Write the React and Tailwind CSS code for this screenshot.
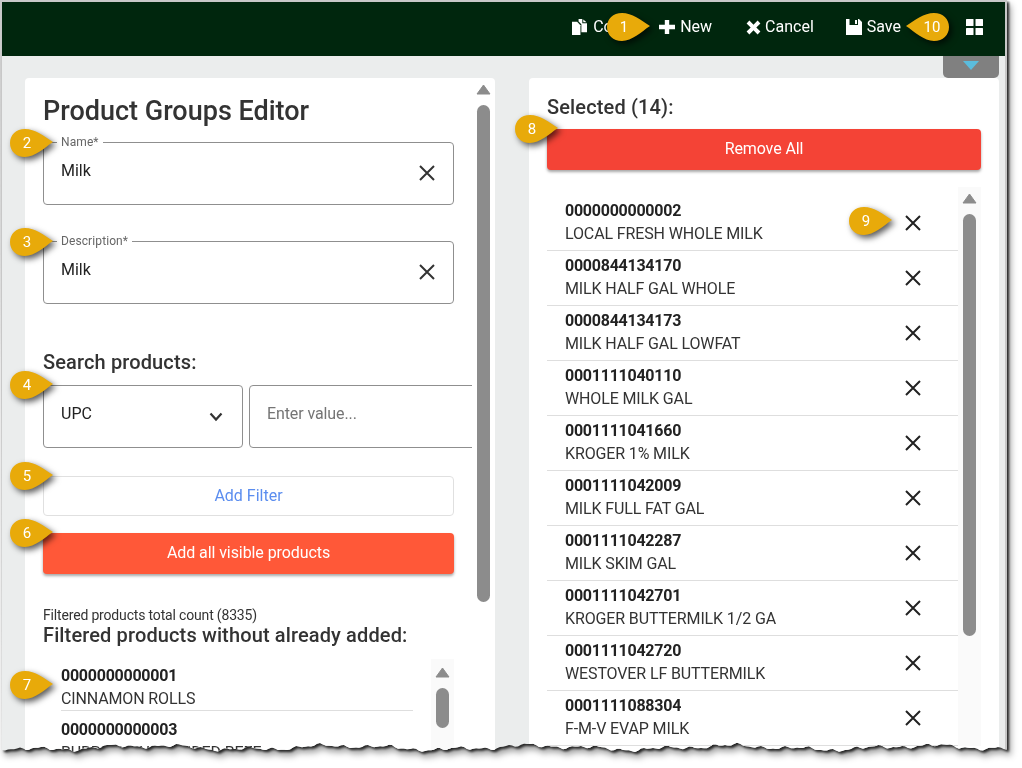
const selected = [
  ["0000000000002", "LOCAL FRESH WHOLE MILK"],
  ["0000844134170", "MILK HALF GAL WHOLE"],
  ["0000844134173", "MILK HALF GAL LOWFAT"],
  ["0001111040110", "WHOLE MILK GAL"],
  ["0001111041660", "KROGER 1% MILK"],
  ["0001111042009", "MILK FULL FAT GAL"],
  ["0001111042287", "MILK SKIM GAL"],
  ["0001111042701", "KROGER BUTTERMILK 1/2 GA"],
  ["0001111042720", "WESTOVER LF BUTTERMILK"],
  ["0001111088304", "F-M-V EVAP MILK"],
];

const callouts = [
  { n: 1, x: 605, y: 11 },
  { n: 10, x: 904, y: 11, flip: true },
  { n: 2, x: 8, y: 127 },
  { n: 3, x: 8, y: 226 },
  { n: 4, x: 8, y: 369 },
  { n: 5, x: 8, y: 460 },
  { n: 6, x: 8, y: 517 },
  { n: 7, x: 8, y: 669 },
  { n: 8, x: 513, y: 113 },
  { n: 9, x: 847, y: 205 },
];

// torn paper edge along the bottom of the screenshot
function tornEdge() {
  const pts = ["0px 0px", "1007px 0px"];
  for (let x = 1007; x >= 0; x -= 3) {
    const y =
      747.5 +
      1.8 * Math.sin(x / 31) +
      1.3 * Math.sin(x / 11 + 1) +
      1.1 * Math.sin(x / 3.7) +
      0.7 * Math.sin(x / 1.9);
    pts.push(`${x}px ${y.toFixed(1)}px`);
  }
  return `polygon(${pts.join(",")})`;
}

function CloseIcon({ className }) {
  return (
    <svg viewBox="0 0 18 18" className={className} fill="none" stroke="currentColor" strokeWidth="2">
      <path d="M2 2 L16 16 M16 2 L2 16" />
    </svg>
  );
}

function CopyIcon() {
  return (
    <svg viewBox="0 0 16 17" className="w-[15px] h-[16px]" fill="currentColor">
      <path d="M0 3h5.5L9 6.5V17H0z" />
      <path d="M7 0h4v4.5h5V14h-6V5.5L7 2.5z" />
      <path d="M12 0.5L15.5 3.5H12z" />
    </svg>
  );
}

function PlusIcon() {
  return (
    <svg viewBox="0 0 16 16" className="w-[16px] h-[16px]" fill="currentColor">
      <path d="M5.8 1h4.4v4.8H16v4.4h-5.8V15H5.8v-4.8H0V5.8h5.8z" />
    </svg>
  );
}

function TimesIcon() {
  return (
    <svg viewBox="0 0 15 15" className="w-[15px] h-[15px]" fill="currentColor">
      <path d="M3.4 0.6L7.5 4.7L11.6 0.6L14.4 3.4L10.3 7.5L14.4 11.6L11.6 14.4L7.5 10.3L3.4 14.4L0.6 11.6L4.7 7.5L0.6 3.4Z" />
    </svg>
  );
}

function SaveIcon() {
  return (
    <svg viewBox="0 0 16 16" className="w-[16px] h-[16px]" fill="currentColor" fillRule="evenodd">
      <path d="M0 0H13L16 3V16H0ZM3.5 0V6H12V0ZM9 1H11V5H9Z" />
    </svg>
  );
}

function GridIcon() {
  return (
    <svg viewBox="0 0 17 16" className="w-[17px] h-[16px] text-white" fill="currentColor">
      <rect width="7.5" height="7" rx="0.5" />
      <rect x="9.5" width="7.5" height="7" rx="0.5" />
      <rect y="9" width="7.5" height="7" rx="0.5" />
      <rect x="9.5" y="9" width="7.5" height="7" rx="0.5" />
    </svg>
  );
}

function ArrowUp() {
  return (
    <svg viewBox="0 0 15 11" className="w-[15px] h-[11px] shrink-0 text-[#8c8c8c]" fill="currentColor">
      <path d="M7.5 1L14 10H1Z" stroke="currentColor" strokeLinejoin="round" />
    </svg>
  );
}

function Callout({ n, x, y, flip }) {
  return (
    <div
      className="absolute w-[43px] h-[28px] flex items-center drop-shadow-[3px_3px_3px_rgba(0,0,0,0.65)]"
      style={{ left: x, top: y }}
    >
      <svg viewBox="0 0 43 28" className={`absolute inset-0 w-[43px] h-[28px] ${flip ? "-scale-x-100" : ""}`}>
        <path d="M15 0 C25 0 34 7 43 13 C34 19 25 28 15 28 C6 28 0 22 0 14 C0 6 6 0 15 0 Z" fill="#e8aa0a" />
      </svg>
      <span className={`relative text-white text-[15px] text-center w-[34px] ${flip ? "ml-[9px]" : ""}`}>{n}</span>
    </div>
  );
}

function Field({ label, value, className }) {
  return (
    <fieldset className={`h-[70px] border border-[#8f8f8f] rounded pl-[13px] pr-[17px] ${className}`}>
      <legend className="px-[4px] text-[12px] leading-[14px] tracking-[0.1px] text-[#666]">{label}</legend>
      <div className="flex items-center justify-between h-[42px]">
        <span className="text-[16px] text-[#222] pl-[4px] mt-[2px]">{value}</span>
        <CloseIcon className="w-[18px] h-[18px] text-[#333] mt-[6px]" />
      </div>
    </fieldset>
  );
}

function HeaderAction({ icon, label, className }) {
  return (
    <div className={`flex items-center text-white text-[16px] ${className}`}>
      {icon}
      <span>{label}</span>
    </div>
  );
}

function Scrollbar({ thumb, className }) {
  return (
    <div className={`flex flex-col items-center ${className}`}>
      <ArrowUp />
      <div className={`w-[13px] mt-[10px] rounded-[7px] bg-[#8c8c8c] ${thumb}`} />
    </div>
  );
}

export default function App() {
  return (
    <div className="w-[1022px] h-[768px] bg-white overflow-hidden font-['Roboto',sans-serif] text-[#333]">
      <div className="w-[1007px] [filter:drop-shadow(2px_2px_1px_rgba(0,0,0,0.75))_drop-shadow(2px_4px_3px_rgba(0,0,0,0.4))]">
        <div
          className="relative w-[1007px] h-[755px] border-2 border-[#c8c8c8] bg-[#ebeded] flex flex-col overflow-hidden"
          style={{ clipPath: tornEdge() }}
        >
          {/* top bar */}
          <div className="h-[54px] shrink-0 bg-[#00260d] flex items-center justify-end pr-[22px] pb-[4px]">
            <HeaderAction icon={<CopyIcon />} label="Copy" className="gap-[6px] mr-[30px]" />
            <HeaderAction icon={<PlusIcon />} label="New" className="gap-[5px] mr-[34px]" />
            <HeaderAction icon={<TimesIcon />} label="Cancel" className="gap-[4px] mr-[32px]" />
            <HeaderAction icon={<SaveIcon />} label="Save" className="gap-[5px] mr-[65px]" />
            <GridIcon />
          </div>

          {/* collapse tab */}
          <div className="h-[22px] shrink-0 flex justify-end pr-[6px]">
            <div className="w-[56px] h-[22px] bg-[#808080] rounded-b-[5px] flex justify-center pt-[5px]">
              <div className="w-0 h-0 border-x-[8px] border-x-transparent border-t-[9px] border-t-[#5bbcdc]" />
            </div>
          </div>

          <div className="flex-1 min-h-0 flex pl-[23px] pr-[6px] gap-[34px]">
            {/* editor */}
            <div className="w-[470px] bg-white rounded-t flex overflow-hidden">
              <div className="w-[447px] shrink-0 pl-[18px] overflow-hidden">
                <h1 className="mt-[15px] text-[27px] leading-[36px] font-medium text-[#333]">Product Groups Editor</h1>
                <Field label="Name*" value="Milk" className="w-[411px] mt-[6px]" />
                <Field label="Description*" value="Milk" className="w-[411px] mt-[29px]" />
                <h2 className="mt-[46px] text-[20px] leading-[24px] font-medium tracking-[0.13px] text-[#333]">Search products:</h2>
                <div className="mt-[11px] flex gap-[6px] w-[500px]">
                  <div className="w-[200px] h-[63px] border border-[#8f8f8f] rounded pl-[17px] pr-[19px] pt-[18px] flex justify-between">
                    <span className="text-[16px] leading-[20px] text-[#222]">UPC</span>
                    <svg viewBox="0 0 14 10" className="w-[14px] h-[10px] mt-[8px] text-[#333]" fill="none" stroke="currentColor" strokeWidth="2.2">
                      <path d="M1.5 1.5 L7 7.5 L12.5 1.5" />
                    </svg>
                  </div>
                  <div className="w-[290px] h-[63px] border border-[#8f8f8f] rounded pl-[17px] pt-[16px]">
                    <span className="text-[16px] leading-[20px] tracking-[-0.1px] text-[#757575]">Enter value...</span>
                  </div>
                </div>
                <button className="block w-[411px] h-[40px] mt-[28px] border border-[#e0e0e0] rounded text-[16px] text-[#5b8def]">
                  Add Filter
                </button>
                <button className="block w-[411px] h-[41px] mt-[17px] pb-[2px] rounded bg-[#ff5838] text-white text-[16px] tracking-[-0.08px] shadow-[0_2px_3px_rgba(0,0,0,0.35)]">
                  Add all visible products
                </button>
                <p className="mt-[34px] text-[14px] leading-[14px] tracking-[-0.17px] text-[#333]">Filtered products total count (8335)</p>
                <h3 className="mt-[1px] text-[20px] leading-[24px] font-medium tracking-[0.13px] text-[#333]">Filtered products without already added:</h3>
                <div className="mt-[10px] w-[411px] flex">
                  <div className="w-[370px] shrink-0 pl-[18px]">
                    <div className="pt-[8px] h-[54px] border-b border-[#dedede]">
                      <p className="text-[16px] leading-[22px] font-bold tracking-[-0.25px] text-[#222]">0000000000001</p>
                      <p className="text-[16px] leading-[23px] tracking-[-0.13px] text-[#333]">CINNAMON ROLLS</p>
                    </div>
                    <div className="pt-[8px]">
                      <p className="text-[16px] leading-[22px] font-bold tracking-[-0.25px] text-[#222]">0000000000003</p>
                      <p className="text-[16px] leading-[23px] tracking-[-0.13px] text-[#333]">BURRITO UNBRANDED BEEF</p>
                    </div>
                  </div>
                  <Scrollbar thumb="h-[40px]" className="ml-[18px] w-[23px] h-[110px] mt-[2px] bg-[#fafafa] pt-[8px]" />
                </div>
              </div>
              <Scrollbar thumb="h-[497px]" className="w-[23px] pt-[6px]" />
            </div>

            {/* selected products */}
            <div className="w-[470px] bg-white rounded-t px-[18px] overflow-hidden">
              <h2 className="mt-[17px] text-[20px] leading-[24px] font-medium tracking-[0.14px] text-[#333]">Selected (14):</h2>
              <button className="block w-[434px] h-[41px] mt-[10px] pb-[2px] rounded bg-[#f44336] text-white text-[16px] tracking-[-0.1px] shadow-[0_2px_3px_rgba(0,0,0,0.35)]">
                Remove All
              </button>
              <div className="mt-[17px] flex">
                <div className="w-[411px] shrink-0 pt-[9px]">
                  {selected.map(([code, name]) => (
                    <div key={code} className="h-[55px] pl-[18px] pr-[36px] pt-[3px] border-b border-[#dedede] flex items-center justify-between">
                      <div className="mb-[4px]">
                        <p className="text-[16px] leading-[22px] font-bold tracking-[-0.25px] text-[#222]">{code}</p>
                        <p className="text-[16px] leading-[23px] tracking-[-0.13px] text-[#333]">{name}</p>
                      </div>
                      <CloseIcon className="w-[18px] h-[18px] text-[#222] mb-[3px]" />
                    </div>
                  ))}
                </div>
                <Scrollbar thumb="h-[422px]" className="w-[23px] bg-[#fafafa] pt-[6px]" />
              </div>
            </div>
          </div>

          {callouts.map((c) => (
            <Callout key={c.n} {...c} />
          ))}
        </div>
      </div>
    </div>
  );
}
